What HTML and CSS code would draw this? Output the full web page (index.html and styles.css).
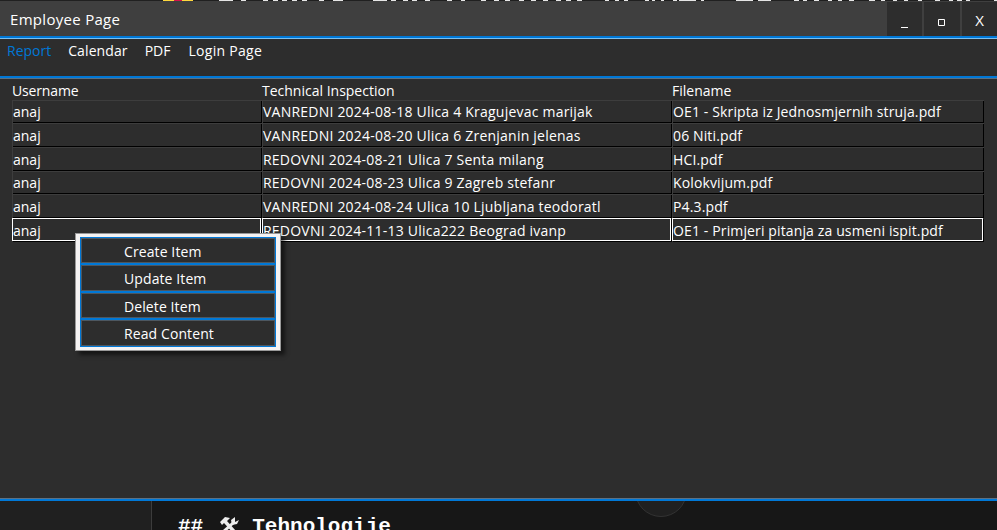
FILE: index.html
```html
<!DOCTYPE html>
<html lang="en">
<head>
<meta charset="utf-8">
<title>Employee Page</title>
<link rel="stylesheet" href="styles.css">
</head>
<body>
<svg class="backdrop-top" width="997" height="1" viewBox="0 0 997 1" shape-rendering="crispEdges">
<path stroke="#ffd83d" d="M163 .5h11M182 .5h11"/>
<path stroke="#d3124b" d="M174 .5h8"/>
<path stroke="#e6e6e6" d="M219 .5h14M241 .5h5M263 .5h5M273 .5h5M282 .5h5M292 .5h5M302 .5h5M319 .5h5M333 .5h10M373 .5h14M391 .5h5M403 .5h5M412 .5h5M425 .5h5M447 .5h5M461 .5h4M481 .5h5M494 .5h5M505 .5h5M519 .5h5M531 .5h5M543 .5h5M556 .5h5M566 .5h5M577 .5h5M605 .5h4M615 .5h4M624 .5h4M645 .5h4M652 .5h3M661 .5h3M673 .5h4M679 .5h17M701 .5h3M736 .5h17M758 .5h13M794 .5h5M803 .5h4M814 .5h5M828 .5h4M838 .5h4M849 .5h5M869 .5h6M881 .5h4M893 .5h4M904 .5h4M918 .5h4M935 .5h5M949 .5h4M957 .5h5M966 .5h4M994 .5h3"/>
</svg>
<div class="window">
  <header class="titlebar">
    <h1>Employee Page</h1>
    <div class="controls"><button><svg width="8" height="2"><path d="M0 .5h7" stroke="#fff"/></svg></button><button><svg width="8" height="8"><path d="M.5 .5h6v6h-6z" fill="none" stroke="#fff"/></svg></button><button class="close">X</button></div>
  </header>
  <nav class="menu"><a class="active">Report</a><a class="calendar">Calendar</a><a class="pdf">PDF</a><a class="login">Login Page</a></nav>
  <main>
    <div class="row head"><span>Username</span><span>Technical Inspection</span><span>Filename</span></div>
    <div class="row"><span>anaj</span><span>VANREDNI 2024-08-18 Ulica 4 Kragujevac marijak</span><span>OE1 - Skripta iz Jednosmjernih struja.pdf</span></div>
    <div class="row"><span>anaj</span><span>VANREDNI 2024-08-20 Ulica 6 Zrenjanin jelenas</span><span>06 Niti.pdf</span></div>
    <div class="row"><span>anaj</span><span>REDOVNI 2024-08-21 Ulica 7 Senta milang</span><span>HCI.pdf</span></div>
    <div class="row"><span>anaj</span><span>REDOVNI 2024-08-23 Ulica 9 Zagreb stefanr</span><span>Kolokvijum.pdf</span></div>
    <div class="row"><span>anaj</span><span>VANREDNI 2024-08-24 Ulica 10 Ljubljana teodoratl</span><span>P4.3.pdf</span></div>
    <div class="row selected"><span>anaj</span><span>REDOVNI 2024-11-13 Ulica222 Beograd ivanp</span><span>OE1 - Primjeri pitanja za usmeni ispit.pdf</span></div>
  </main>
</div>
<ul class="context"><li>Create Item</li><li>Update Item</li><li>Delete Item</li><li>Read Content</li></ul>
<footer class="backdrop-bottom">
  <aside></aside>
  <div class="editor">##<svg width="21" height="20" viewBox="0 0 21 20"><path d="M2 6l5-5 5 1-3 3 9 10-2 3L6 7 4 9z" fill="#eee"/><path d="M4 17L15 7" stroke="#eee" stroke-width="3"/><path d="M17 1l-4 3 1 5 5-1 2-4-4 2z" fill="#eee"/></svg>Tehnologije</div>
  <i class="bubble"></i>
</footer>
</body>
</html>
```
FILE: styles.css
```css
* { box-sizing: border-box; }
body { margin: 0; width: 997px; height: 530px; overflow: hidden; background: #202020; color: #fff; font: 14px/20px "Open Sans", "Noto Sans", sans-serif; display: flex; flex-direction: column; letter-spacing: 0; }
.backdrop-top { display: block; flex: none; }
.window { height: 500px; background: #2d2d2d; display: flex; flex-direction: column; border-bottom: 2px solid #0078d7; box-shadow: inset 0 -1px #5b7184; flex: none; }
.titlebar { height: 38px; flex: none; display: flex; justify-content: space-between; background: #3f3f3f; border-bottom: 1px solid #7cc0f0; box-shadow: inset 0 -2px #0078d7; }
h1 { margin: 8px 0 0 10px; font: inherit; font-size: 15px; letter-spacing: .3px; }
.controls { display: flex; gap: 2px; height: 35px; padding-top: 1px; }
button { width: 36px; border: 0; padding: 0; background: #2d2d2d; color: #fff; font: inherit; display: flex; align-items: center; justify-content: center; }
button:first-child { width: 35px; padding: 17px 0 0 1px; }
button:nth-child(2) { padding-top: 7px; }
.close { width: 35px; font-size: 15px; padding-top: 2px; }
.menu { height: 40px; flex: none; display: flex; padding: 2px 0 0 7px; gap: 17px; border-bottom: 1px solid #5b7184; box-shadow: inset 0 -2px #0078d7; }
.active { color: #0078d7; }
.calendar { letter-spacing: .1px; }
.pdf { margin-right: 1px; }
.login { letter-spacing: .28px; }
main { padding: 2px 0 0 12px; }
.row { display: grid; grid-template-columns: 250px 410px 312px; grid-template-rows: 100%; height: 24px; }
.row:nth-child(2), .row:nth-child(5) { height: 23px; }
.row.head { height: 19px; }
.row span { border: 1px solid #3d3d3d; border-width: 1px 0 0 1px; box-shadow: inset -1px -1px #000; line-height: 24px; height: 100%; white-space: nowrap; }
.row:nth-child(2) span, .row:nth-child(5) span { line-height: 22px; }
.row span:nth-child(2) { letter-spacing: .22px; }
.row span:nth-child(3) { letter-spacing: .13px; }
.row.head span { border: 0; box-shadow: none; letter-spacing: 0; line-height: 20px; }
.row.head span:first-child { letter-spacing: -.15px; }
.row.selected span { border: 1px solid #fff; box-shadow: 1px 1px #000; margin-right: 1px; height: 23px; }
.context { position: absolute; left: 75px; top: 233px; width: 206px; height: 118px; margin: 0; padding: 3px 4px; list-style: none; background: #f5f3f3; border: 1px solid #999; box-shadow: 4px 4px 4px #0008; letter-spacing: .1px; }
li { height: 28px; background: #2d2d2d; border: 1px solid #0078d7; box-shadow: inset 0 0 0 1px #4d5760; padding: 4px 0 0 43px; }
li:nth-child(odd) { height: 27px; }
.backdrop-bottom { flex: 1; display: flex; background: #171717; position: relative; overflow: hidden; }
aside { width: 152px; background: #202020; border-right: 1px solid #3c3c3c; }
.editor { padding: 14px 0 0 26px; font: bold 21px/24px "Liberation Mono", monospace; letter-spacing: 0; }
.editor svg { margin: 0 13px 0 15px; vertical-align: -4px; }
.bubble { position: absolute; left: 635px; top: -36px; width: 52px; height: 52px; border: 1px solid #333; border-radius: 50%; background: #202020; }
```
